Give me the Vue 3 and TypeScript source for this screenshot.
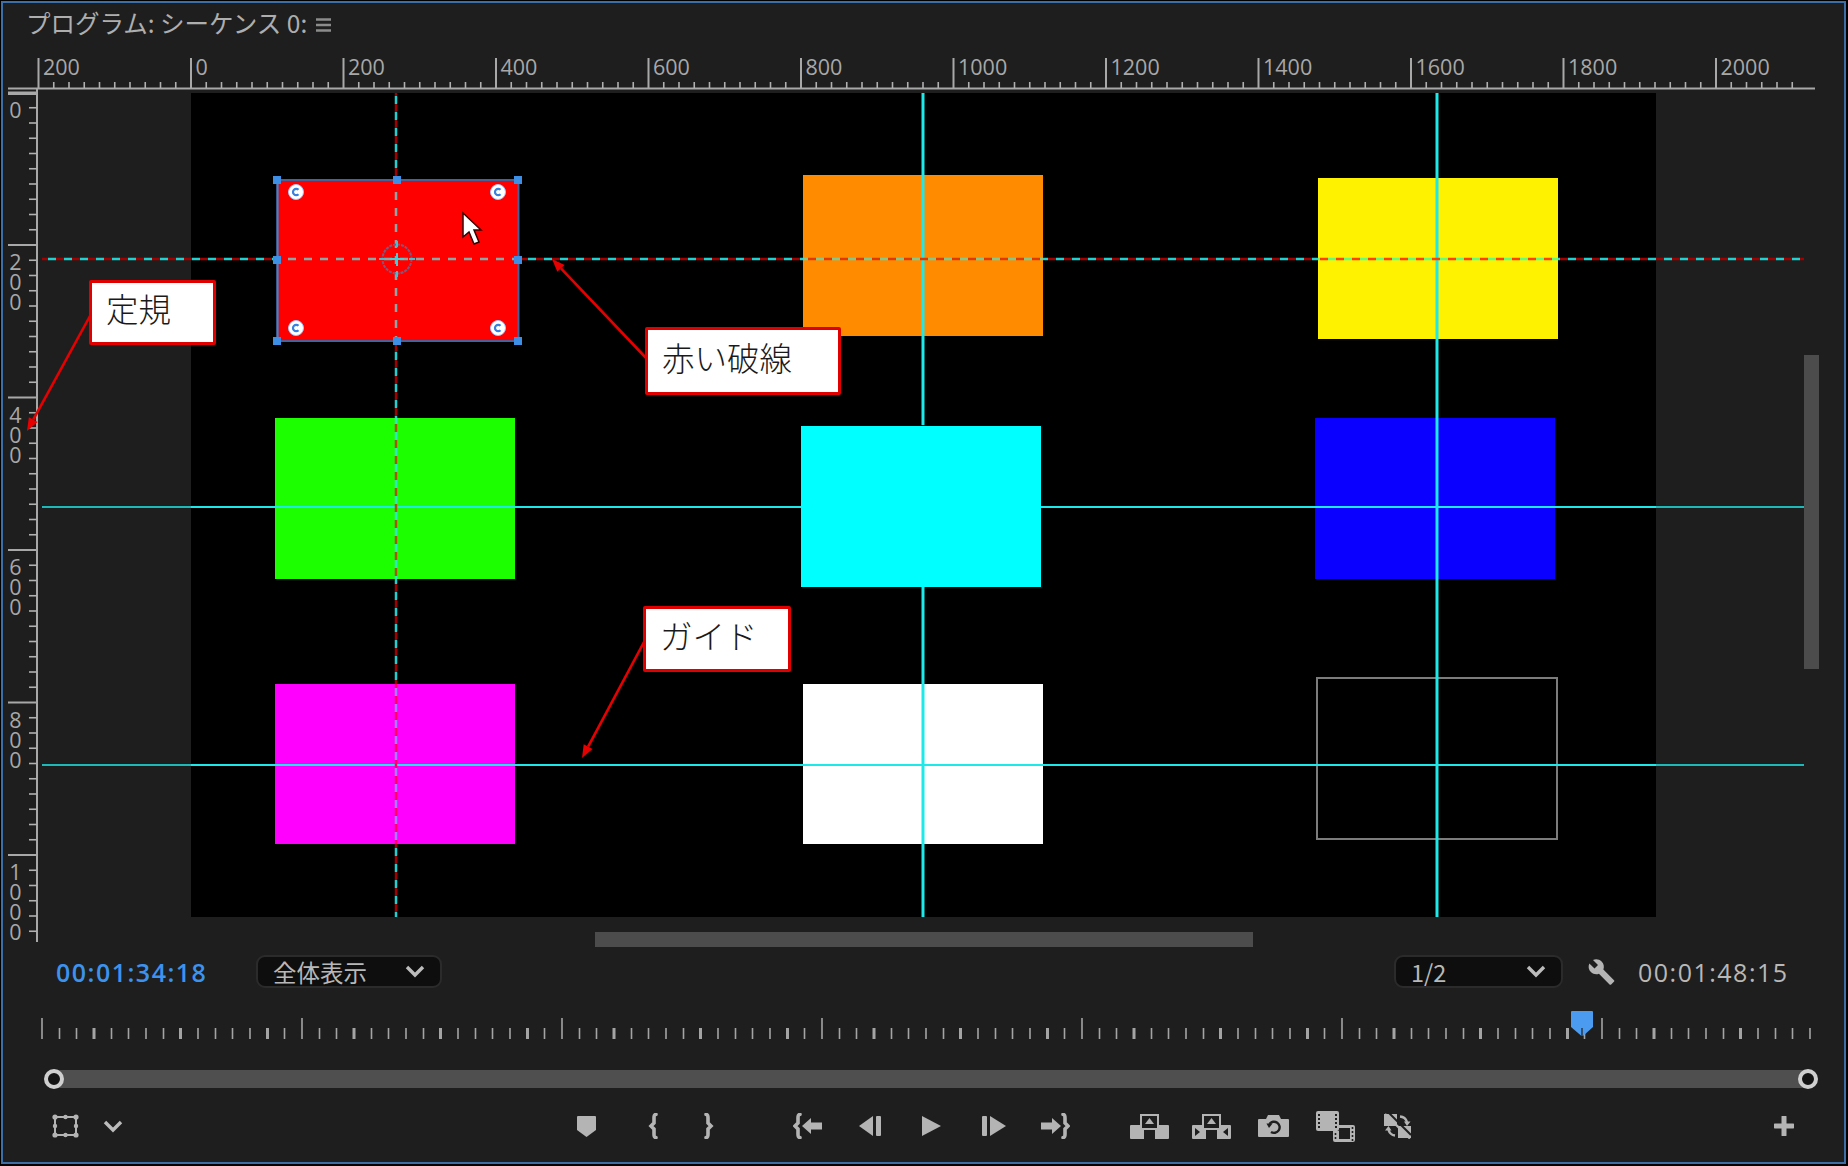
<template>
  <div class="page">
    <div class="panel">
      <header class="panel-head">
        <span class="panel-title">プログラム: シーケンス 0:</span>
        <svg class="panel-menu" width="15" height="14" viewBox="0 0 15 14">
          <path d="M0 1.5H15M0 7H15M0 12.5H15" stroke="#8c8c8c" stroke-width="2.4" />
        </svg>
      </header>

      <div class="monitor">
        <!-- page coordinates in the viewBox, easier to compare with the reference -->
        <svg class="ruler-top" width="1841" height="50" viewBox="3 43 1841 50">
          <path d="M8 88.5H1815M8 94H38" stroke="#a8a8a8" stroke-width="2" />
          <path v-for="x in topMinor" :key="x" :d="`M${x} 82V88`" stroke="#b0b0b0" stroke-width="1.6" />
          <path v-for="t in topMajor" :key="t.x" :d="`M${t.x} 58V88`" stroke="#a8a8a8" stroke-width="2" />
          <text v-for="t in topMajor" :key="t.x" :x="t.x + 4.500" y="75" class="ruler-text">{{ t.label }}</text>
        </svg>

        <div class="monitor-body">
          <svg class="ruler-left" width="35" height="855" viewBox="3 93 35 855">
            <path d="M37 88V942" stroke="#a8a8a8" stroke-width="2" />
            <path v-for="y in leftMinor" :key="y" :d="`M29 ${y}H37`" stroke="#b0b0b0" stroke-width="1.6" />
            <path v-for="t in leftMajor" :key="t.y" :d="`M8 ${t.y}H37`" stroke="#a8a8a8" stroke-width="2" />
            <text v-for="t in leftMajor" :key="t.label" x="15.500" :y="t.y + 2" class="ruler-text ruler-text-v">{{ t.label }}</text>
          </svg>

          <div class="viewport">
            <div class="stage"></div>
            <div class="hscroll"></div>
            <div class="vscroll"></div>

            <svg class="overlay" width="1806" height="855" viewBox="38 93 1806 855">
              <rect
                v-for="c in clips"
                :key="c.fill"
                :x="c.x"
                :y="c.y"
                :width="c.w"
                :height="c.h"
                :fill="c.fill"
              />
              <rect x="1317" y="678" width="240" height="161" fill="none" stroke="#7c7c7c" stroke-width="2" />

              <!-- solid guides -->
              <path d="M923 93V425M923 587V917M1437 93V917" stroke="#1fe8e8" stroke-width="3" />
              <path d="M191 507H801M1041 507H1656M191 765H1656" stroke="#1fe8e8" stroke-width="2" />
              <path d="M42 507H191M1656 507H1804M42 765H191M1656 765H1804" stroke="#1fb8b8" stroke-width="2" />

              <!-- selected guides: cyan and dark red dashes -->
              <template v-for="s in dashed" :key="s.id">
                <path :d="s.d" :stroke="s.cyan" stroke-width="2.5" stroke-dasharray="8 8" :stroke-dashoffset="s.off" />
                <path :d="s.d" :stroke="s.red" stroke-width="2.5" stroke-dasharray="8 8" :stroke-dashoffset="s.off + 8" />
              </template>

              <!-- selection on the red clip -->
              <rect x="277.5" y="180" width="241" height="161" fill="none" stroke="#4a6098" stroke-width="2" />
              <path d="M277.5 180V341" stroke="#4a80c8" stroke-width="2" />
              <rect
                v-for="h in handles"
                :key="`${h[0]}-${h[1]}`"
                :x="h[0] - 4"
                :y="h[1] - 4"
                width="8"
                height="8"
                fill="#3d8fe6"
              />
              <g v-for="k in keyPoints" :key="`${k[0]}-${k[1]}`">
                <circle :cx="k[0]" :cy="k[1]" r="7.5" fill="#fff" stroke="#a8c4f4" stroke-width="1" />
                <path
                  :d="`M${k[0] + 2.5} ${k[1] - 2.2}A3.2 3.2 0 1 0 ${k[0] + 2.5} ${k[1] + 2.2}`"
                  fill="none"
                  stroke="#3a80e0"
                  stroke-width="2.2"
                />
              </g>
              <circle cx="397" cy="259" r="14.5" fill="none" stroke="#7a5a80" stroke-width="2" stroke-dasharray="3 1" />
              <path d="M397 253V266M390 259H404" stroke="#40d0dc" stroke-width="2" />
              <path d="M379 259H385M409 259H415M397 241V247M397 271V277" stroke="#40c0d0" stroke-width="2" />
              <path d="M463 213V237L469 232L474 244L479 242L474 230H481Z" fill="#fff" stroke="#300" stroke-width="1.5" />
            </svg>
          </div>
        </div>
      </div>

      <div class="time-row">
        <span class="time-now">00:01:34:18</span>
        <div class="drop drop-fit">
          <span>全体表示</span>
          <svg width="20" height="13" viewBox="0 0 20 13"><path d="M2 2L10 10L18 2" class="chev" /></svg>
        </div>
        <div class="drop drop-res">
          <span>1/2</span>
          <svg width="20" height="13" viewBox="0 0 20 13"><path d="M2 2L10 10L18 2" class="chev" /></svg>
        </div>
        <svg class="wrench" width="29" height="28" viewBox="0 0 24 24">
          <path
            d="M22.7 19l-9.1-9.1c.9-2.3.4-5-1.5-6.9-2-2-5-2.4-7.4-1.3L9 6 6 9 1.6 4.7C.4 7.1.9 10.1 2.9 12.1c1.9 1.9 4.6 2.4 6.9 1.5l9.1 9.1c.4.4 1 .4 1.4 0l2.3-2.3c.5-.4.5-1.1.1-1.4z"
            fill="#b4b4b4"
          />
        </svg>
        <span class="time-total">00:01:48:15</span>
      </div>

      <svg class="time-ruler" width="1841" height="44" viewBox="3 998 1841 44">
        <path
          v-for="t in timeTicks"
          :key="t.x"
          :d="`M${t.x} ${t.major ? 1018 : 1028}V1039`"
          stroke="#a4a4a4"
          :stroke-width="t.wide ? 3 : 1.6"
        />
        <path d="M1571 1012Q1571 1011 1572 1011H1592Q1593 1011 1593 1012V1027L1583 1036L1581.5 1036L1571 1027Z" fill="#4b9bf0" />
        <path d="M1582 1028V1038" stroke="#1e1e1e" stroke-width="1.2" />
      </svg>

      <div class="scrub"></div>

      <div class="tools">
        <div class="tool tool-crop">
          <svg width="27" height="24" viewBox="0 0 27 24">
            <rect x="3" y="3" width="21" height="18" fill="none" stroke="#b4b4b4" stroke-width="2" />
            <g fill="#b4b4b4">
              <circle cx="3" cy="3" r="2.6" /><circle cx="13.5" cy="3" r="2.2" /><circle cx="24" cy="3" r="2.6" />
              <circle cx="3" cy="12" r="2.2" /><circle cx="24" cy="12" r="2.2" />
              <circle cx="3" cy="21" r="2.6" /><circle cx="13.5" cy="21" r="2.2" /><circle cx="24" cy="21" r="2.6" />
            </g>
          </svg>
        </div>
        <div class="tool tool-crop">
          <svg width="20" height="13" viewBox="0 0 20 13"><path d="M2 2L10 10L18 2" class="chev" /></svg>
        </div>

        <div class="tool tool-mark first-mark">
          <svg width="19" height="21" viewBox="0 0 19 21">
            <path d="M1 0H18Q19 0 19 1V14L9.5 21L0 14V1Q0 0 1 0Z" fill="#b4b4b4" />
          </svg>
        </div>
        <div class="tool tool-mark second-mark">
          <svg width="10" height="26" viewBox="0 0 10 26">
            <path d="M8 1.5C6 1.5 6 3 6 5V10L3 13L6 16V21C6 23 6 24.5 8 24.5" class="brace" />
          </svg>
        </div>
        <div class="tool tool-mark">
          <svg width="10" height="26" viewBox="0 0 10 26">
            <path d="M2 1.5C4 1.5 4 3 4 5V10L7 13L4 16V21C4 23 4 24.5 2 24.5" class="brace" />
          </svg>
        </div>

        <div class="tool first-step">
          <svg width="29" height="26" viewBox="0 0 29 26">
            <path d="M7 1.5C5 1.5 5 3 5 5V10L2 13L5 16V21C5 23 5 24.5 7 24.5" class="brace" />
            <path d="M9 13L18 5V9.5H29V16.5H18V21Z" fill="#b4b4b4" />
          </svg>
        </div>
        <div class="tool">
          <svg width="22" height="20" viewBox="0 0 22 20">
            <path d="M14 0V20L0 10Z" fill="#b4b4b4" /><rect x="17" width="5" height="20" rx="1" fill="#b4b4b4" />
          </svg>
        </div>
        <div class="tool">
          <svg width="19" height="20" viewBox="0 0 19 20"><path d="M0 0L19 10L0 20Z" fill="#b4b4b4" /></svg>
        </div>
        <div class="tool">
          <svg width="24" height="20" viewBox="0 0 24 20">
            <rect width="5" height="20" rx="1" fill="#b4b4b4" /><path d="M8 0L24 10L8 20Z" fill="#b4b4b4" />
          </svg>
        </div>
        <div class="tool">
          <svg width="29" height="26" viewBox="0 0 29 26">
            <path d="M0 9.5H11V5L20 13L11 21V16.5H0Z" fill="#b4b4b4" />
            <path d="M22 1.5C24 1.5 24 3 24 5V10L27 13L24 16V21C24 23 24 24.5 22 24.5" class="brace" />
          </svg>
        </div>

        <div class="tool first-edit">
          <svg width="39" height="25" viewBox="0 0 39 25">
            <path d="M1 11H15V14H24V11H38Q39 11 39 12V24Q39 25 38 25H25V16H14V25H1Q0 25 0 24V12Q0 11 1 11Z" fill="#b4b4b4" />
            <rect x="11" y="1" width="17" height="14" fill="#1e1e1e" stroke="#b4b4b4" stroke-width="2" />
            <path d="M19.5 4L24 10H15Z" fill="#b4b4b4" />
          </svg>
        </div>
        <div class="tool">
          <svg width="39" height="25" viewBox="0 0 39 25">
            <path d="M1 11H15V14H24V11H38Q39 11 39 12V24Q39 25 38 25H25V16H14V25H1Q0 25 0 24V12Q0 11 1 11Z" fill="#b4b4b4" />
            <rect x="11" y="1" width="17" height="14" fill="#1e1e1e" stroke="#b4b4b4" stroke-width="2" />
            <path d="M19.5 4L24 10H15Z" fill="#b4b4b4" />
            <path d="M3 14L8 18L3 22ZM36 14L31 18L36 22Z" fill="#1e1e1e" />
          </svg>
        </div>
        <div class="tool">
          <svg width="31" height="22" viewBox="0 0 31 22">
            <path d="M1 4H8L10 0H21L23 4H30Q31 4 31 5V21Q31 22 30 22H1Q0 22 0 21V5Q0 4 1 4Z" fill="#b4b4b4" />
            <path d="M11.5 9A5.6 5.6 0 1 1 13 17" fill="none" stroke="#1e1e1e" stroke-width="2.4" />
            <path d="M8.5 8.5H14.5L11 13Z" fill="#1e1e1e" />
          </svg>
        </div>
        <div class="tool">
          <svg width="39" height="31" viewBox="0 0 39 31">
            <rect width="23" height="20" rx="2" fill="#b4b4b4" />
            <path d="M3 3V17M20 3V17" stroke="#1e1e1e" stroke-width="2" stroke-dasharray="2 2" />
            <path d="M17 14H37Q39 14 39 16V29Q39 31 37 31H19Q17 31 17 29V20H23V14Z" fill="#b4b4b4" />
            <rect x="23" y="17" width="11" height="11" fill="#1e1e1e" />
            <path d="M19.5 22V30M36.5 16V30" stroke="#1e1e1e" stroke-width="1.6" stroke-dasharray="2 2" />
          </svg>
        </div>
        <div class="tool">
          <svg width="27" height="26" viewBox="0 0 27 26">
            <rect x="0" y="1" width="13" height="12" fill="#b4b4b4" />
            <rect x="14" y="13" width="13" height="12" fill="#b4b4b4" />
            <path d="M16 3.5A8 8 0 0 1 23 9M11 22.5A8 8 0 0 1 4.500 17" fill="none" stroke="#b4b4b4" stroke-width="2.4" />
            <path d="M20 8.500H26.500L23 13ZM1 17.500H7.500L4.500 13Z" fill="#b4b4b4" />
            <path d="M5 0L27 22" stroke="#1e1e1e" stroke-width="2" />
            <path d="M1 1L26 25.500" stroke="#b4b4b4" stroke-width="2.4" />
          </svg>
        </div>

        <div class="tool tool-plus">
          <svg width="20" height="20" viewBox="0 0 20 20">
            <path d="M10 1V19M1 10H19" stroke="#b4b4b4" stroke-width="5" stroke-linecap="round" />
          </svg>
        </div>
      </div>
    </div>

    <!-- explanation notes on top of the screenshot -->
    <svg class="notes" width="1848" height="1166" viewBox="0 0 1848 1166">
      <g v-for="a in arrows" :key="a.id">
        <path :d="a.line" stroke="#e60000" stroke-width="2.6" fill="none" />
        <path :d="a.head" fill="#e60000" />
      </g>
    </svg>
    <div class="note note-ruler">定規</div>
    <div class="note note-dash">赤い破線</div>
    <div class="note note-guide">ガイド</div>
  </div>
</template>

<script setup lang="ts">
const step = 152.5;

const topLabels = ["200", "0", "200", "400", "600", "800", "1000", "1200", "1400", "1600", "1800", "2000"];
const topMajor = topLabels.map((label, i) => ({ x: 38.5 + i * step, label }));

const topMinor: number[] = [];
for (let i = 0; i < 116; i++) {
  if (i % 10 !== 0) topMinor.push(38.5 + i * 15.25);
}

const leftLabels = ["0", "200", "400", "600", "800", "1000"];
const leftMajor = leftLabels.map((label, i) => ({ y: 92.5 + i * step, label }));
const leftMinor: number[] = [];
for (let i = 1; i < 56; i++) {
  if (i % 10 !== 0) leftMinor.push(92.5 + i * 15.25);
}

const clips = [
  { x: 277, y: 180, w: 241, h: 161, fill: "#ff0000" },
  { x: 803, y: 175, w: 240, h: 161, fill: "#ff8c00" },
  { x: 1318, y: 178, w: 240, h: 161, fill: "#fff200" },
  { x: 275, y: 418, w: 240, h: 161, fill: "#1cff00" },
  { x: 801, y: 426, w: 240, h: 161, fill: "#00ffff" },
  { x: 1315, y: 418, w: 240, h: 161, fill: "#0a00ff" },
  { x: 275, y: 684, w: 240, h: 160, fill: "#ff00ff" },
  { x: 803, y: 684, w: 240, h: 160, fill: "#ffffff" },
];

// one stretch per background, the dash phase stays continuous
const makeDash = (horizontal: boolean, from: number, to: number, cyan: string, red: string) => ({
  id: `${horizontal ? "h" : "v"}${from}`,
  d: horizontal ? `M${from} 259H${to}` : `M396 ${from}V${to}`,
  off: from % 16,
  cyan,
  red,
});

const dashed = [
  makeDash(true, 42, 277, "#22d0d0", "#a00000"),
  makeDash(true, 277, 518, "#88a8a8", "#ff0000"),
  makeDash(true, 518, 803, "#22d0d0", "#a00000"),
  makeDash(true, 803, 1043, "#80c890", "#e03800"),
  makeDash(true, 1043, 1318, "#22d0d0", "#a00000"),
  makeDash(true, 1318, 1558, "#60ff80", "#ff4000"),
  makeDash(true, 1558, 1804, "#22d0d0", "#a00000"),
  makeDash(false, 93, 180, "#22d0d0", "#a00000"),
  makeDash(false, 180, 341, "#88a8a8", "#ff0000"),
  makeDash(false, 341, 418, "#22d0d0", "#a00000"),
  makeDash(false, 418, 579, "#30e8c0", "#b05010"),
  makeDash(false, 579, 684, "#22d0d0", "#a00000"),
  makeDash(false, 684, 844, "#a080ff", "#ff0060"),
  makeDash(false, 844, 917, "#22d0d0", "#a00000"),
];

const handles = [
  [277, 180],
  [397, 180],
  [518, 180],
  [277, 260],
  [518, 260],
  [277, 341],
  [397, 341],
  [518, 341],
];
const keyPoints = [
  [296, 192],
  [498, 192],
  [296, 328],
  [498, 328],
];

const timeTicks: { x: number; major: boolean; wide: boolean }[] = [];
for (let i = 0; i < 103; i++) {
  const x = Math.round((42 + (i * 260) / 15) * 2) / 2;
  if (x > 1812) break;
  timeTicks.push({ x, major: i % 15 === 0, wide: i % 15 !== 0 && i % 5 === 3 });
}

// tail from the note box, triangle at the target
const makeArrow = (id: string, x1: number, y1: number, x2: number, y2: number) => {
  const len = Math.hypot(x2 - x1, y2 - y1);
  const ux = (x2 - x1) / len;
  const uy = (y2 - y1) / len;
  const bx = x2 - ux * 13;
  const by = y2 - uy * 13;
  return {
    id,
    line: `M${x1} ${y1}L${bx} ${by}`,
    head: `M${x2} ${y2}L${bx - uy * 5} ${by + ux * 5}L${bx + uy * 5} ${by - ux * 5}Z`,
  };
};

const arrows = [
  makeArrow("ruler", 90, 316, 27, 431),
  makeArrow("dash", 647, 359, 552, 259),
  makeArrow("guide", 644, 642, 582, 758),
];
</script>

<style scoped>
.page {
  position: relative;
  width: 1848px;
  height: 1166px;
  overflow: hidden;
  background: #000;
  font-family: "Noto Sans CJK JP", "Open Sans", sans-serif;
}

.panel {
  box-sizing: border-box;
  width: 1845px;
  height: 1163px;
  margin: 1px 0 0 1px;
  border: 2px solid #3e6ea6;
  background: #1e1e1e;
  color: #b4b4b4;
}

.panel-head {
  display: flex;
  align-items: center;
  height: 40px;
  padding-left: 23px;
  box-sizing: border-box;
}

.panel-title {
  font-size: 24.5px;
  line-height: 40px;
  color: #aeaeae;
}

.panel-menu {
  margin: 3px 0 0 9px;
}

.monitor {
  height: 905px;
}

.ruler-top,
.ruler-left,
.time-ruler {
  display: block;
  overflow: visible;
}

.ruler-text {
  font-family: "Open Sans", sans-serif;
  font-size: 21.5px;
  fill: #a8a8a8;
}

/* stacked digits on the left ruler */
.ruler-text-v {
  writing-mode: vertical-rl;
  text-orientation: upright;
  letter-spacing: -9px;
}

.monitor-body {
  display: flex;
}

.viewport {
  position: relative;
  flex: 1;
  height: 855px;
}

.stage {
  width: 1465px;
  height: 824px;
  margin-left: 153px;
  background: #000;
}

.hscroll {
  width: 658px;
  height: 15px;
  margin: 15px 0 0 557px;
  background: #4c4c4c;
}

.vscroll {
  position: absolute;
  top: 262px;
  right: 25px;
  width: 15px;
  height: 314px;
  background: #4c4c4c;
}

.overlay {
  position: absolute;
  top: 0;
  left: 0;
  pointer-events: none;
}

.time-row {
  display: flex;
  align-items: center;
  box-sizing: border-box;
  height: 50px;
  padding: 0 57px 3px 53px;
}

.time-now,
.time-total {
  font-family: "Open Sans", sans-serif;
  font-size: 25px;
  font-weight: 500;
  letter-spacing: 1.5px;
  white-space: nowrap;
}

.time-now {
  width: 150px;
  margin-right: 50px;
  font-weight: 600;
  color: #3d92ee;
}

.time-total {
  width: 149px;
  margin-left: 22px;
  color: #b8b8b8;
}

.drop {
  box-sizing: border-box;
  display: flex;
  align-items: center;
  justify-content: space-between;
  height: 33px;
  padding: 0 15px;
  border: 2px solid #2b2b2b;
  border-radius: 9px;
  background: #0e0e0e;
  font-size: 23.5px;
  color: #b8b8b8;
}

.drop-fit {
  width: 186px;
}

.drop-res {
  width: 169px;
  margin-left: auto;
}

.chev {
  fill: none;
  stroke: #bcbcbc;
  stroke-width: 3.4;
}

.wrench {
  margin-left: 24px;
}

.scrub {
  position: relative;
  height: 18px;
  margin: 28px 36px 0 51px;
  background: #4f4f4f;
}

.scrub::before,
.scrub::after {
  content: "";
  position: absolute;
  top: -1px;
  box-sizing: border-box;
  width: 20px;
  height: 20px;
  border: 4px solid #cfcfcf;
  border-radius: 50%;
  background: #141414;
}

.scrub::before {
  left: -10px;
}

.scrub::after {
  right: -10px;
}

.tools {
  display: flex;
  align-items: center;
  box-sizing: border-box;
  height: 74px;
  padding: 2px 29px 0 38px;
}

.tool {
  display: flex;
  flex: none;
  align-items: center;
  justify-content: center;
  width: 62px;
}

.tool-crop {
  width: 48px;
}

.tool-mark {
  width: 56px;
}

.first-mark {
  margin-left: 421.5px;
}

.second-mark {
  margin-left: 10px;
}

.first-step {
  margin-left: 40px;
}

.first-edit {
  margin-left: 31.5px;
}

.tool-plus {
  margin-left: auto;
}

.brace {
  fill: none;
  stroke: #b4b4b4;
  stroke-width: 3.6;
  stroke-linecap: round;
}

.notes {
  position: absolute;
  top: 0;
  left: 0;
  pointer-events: none;
}

.note {
  position: absolute;
  box-sizing: border-box;
  display: flex;
  align-items: center;
  padding: 0 0 10px 14px;
  border: 3px solid #e00000;
  border-radius: 2px;
  background: #fff;
  color: #1a1a1a;
  font-size: 32.5px;
  font-weight: 300;
}

.note-ruler {
  top: 280px;
  left: 89px;
  width: 127px;
  height: 65px;
}

.note-dash {
  top: 327px;
  left: 645px;
  width: 196px;
  height: 68px;
}

.note-guide {
  top: 606px;
  left: 643px;
  width: 148px;
  height: 66px;
}
</style>

<style>
html,
body {
  background: #000;
}
</style>
